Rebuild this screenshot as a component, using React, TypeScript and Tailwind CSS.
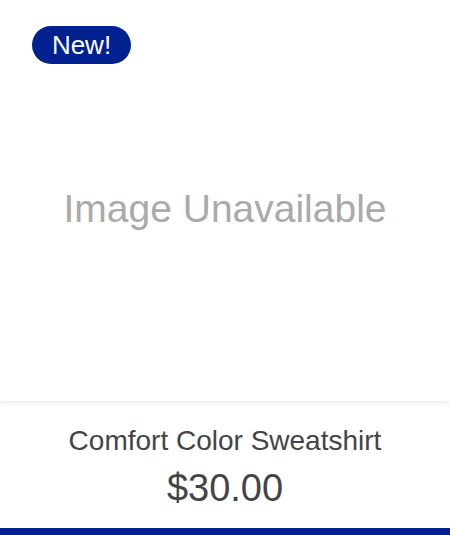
const App = () => {
  return (
    <div className="w-[450px] h-[535px] bg-white flex flex-col overflow-hidden font-['Liberation_Sans',Arial,sans-serif]">
      <div className="relative h-[401px] shrink-0 flex items-center justify-center shadow-[0_2px_4px_rgba(0,0,0,0.08)]">
        <span className="absolute left-[32px] top-[26px] h-[38px] w-[99px] rounded-full bg-[#00218f] text-white text-[26px] leading-none flex items-center justify-center">
          New!
        </span>
        <span className="text-[#aaaaaa] text-[39px] mt-[18px]">Image Unavailable</span>
      </div>
      <div className="flex-1 flex flex-col items-center pt-[24px]">
        <h2 className="text-[28px] leading-[32px] text-[#444444]">Comfort Color Sweatshirt</h2>
        <p className="text-[38px] leading-[44px] mt-[9px] text-[#444444]">$30.00</p>
      </div>
      <div className="h-[7px] shrink-0 bg-[#00218f]" />
    </div>
  );
};

export default App;
